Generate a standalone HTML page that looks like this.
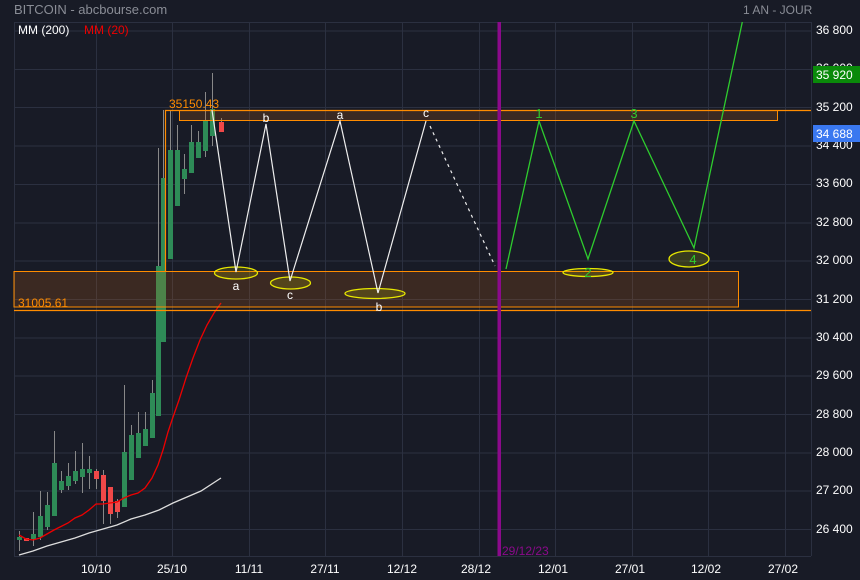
<!DOCTYPE html>
<html><head><meta charset="utf-8"><style>
html,body{margin:0;padding:0;background:#181b26;width:860px;height:580px;overflow:hidden}
svg{display:block;font-family:"Liberation Sans",sans-serif}
</style></head><body>
<svg width="860" height="580" viewBox="0 0 860 580">
<rect width="860" height="580" fill="#181b26"/>
<text x="14" y="14" fill="#8a8d96" font-size="13">BITCOIN - abcbourse.com</text>
<text x="743" y="14" fill="#8a8d96" font-size="12">1 AN - JOUR</text>
<g stroke="#2b3040" stroke-width="1">
<line x1="14" y1="31" x2="811" y2="31"/><line x1="14" y1="69.5" x2="811" y2="69.5"/><line x1="14" y1="107.5" x2="811" y2="107.5"/><line x1="14" y1="146" x2="811" y2="146"/><line x1="14" y1="184.5" x2="811" y2="184.5"/><line x1="14" y1="223" x2="811" y2="223"/><line x1="14" y1="261" x2="811" y2="261"/><line x1="14" y1="299.5" x2="811" y2="299.5"/><line x1="14" y1="338" x2="811" y2="338"/><line x1="14" y1="376" x2="811" y2="376"/><line x1="14" y1="414.5" x2="811" y2="414.5"/><line x1="14" y1="453" x2="811" y2="453"/><line x1="14" y1="491" x2="811" y2="491"/><line x1="14" y1="529.5" x2="811" y2="529.5"/>
<line x1="96.5" y1="22" x2="96.5" y2="556"/><line x1="172.5" y1="22" x2="172.5" y2="556"/><line x1="249.5" y1="22" x2="249.5" y2="556"/><line x1="325.5" y1="22" x2="325.5" y2="556"/><line x1="402.5" y1="22" x2="402.5" y2="556"/><line x1="479.5" y1="22" x2="479.5" y2="556"/><line x1="555.5" y1="22" x2="555.5" y2="556"/><line x1="632.5" y1="22" x2="632.5" y2="556"/><line x1="708.5" y1="22" x2="708.5" y2="556"/><line x1="785.5" y1="22" x2="785.5" y2="556"/>
<line x1="14.5" y1="22" x2="14.5" y2="556"/><line x1="811.5" y1="22" x2="811.5" y2="556"/><line x1="14" y1="22.5" x2="811" y2="22.5"/><line x1="14" y1="556.5" x2="811" y2="556.5"/>
</g>
<text x="18" y="34" fill="#fff" font-size="12">MM (200)</text>
<text x="84" y="34" fill="#e00" font-size="12">MM (20)</text>
<g stroke="#888" stroke-width="1">
<line x1="19.5" y1="531" x2="19.5" y2="551"/><line x1="33.5" y1="512" x2="33.5" y2="546"/><line x1="40.5" y1="491" x2="40.5" y2="540"/><line x1="47.5" y1="492" x2="47.5" y2="530"/><line x1="54.5" y1="431" x2="54.5" y2="516"/><line x1="61.5" y1="471" x2="61.5" y2="493"/><line x1="68.5" y1="463" x2="68.5" y2="490"/><line x1="75.5" y1="451" x2="75.5" y2="484"/><line x1="82.5" y1="443" x2="82.5" y2="493"/><line x1="89.5" y1="456" x2="89.5" y2="489"/><line x1="96.5" y1="469" x2="96.5" y2="489"/><line x1="103.5" y1="470" x2="103.5" y2="524"/><line x1="110.5" y1="487" x2="110.5" y2="524"/><line x1="117.5" y1="499" x2="117.5" y2="518"/><line x1="124.5" y1="385" x2="124.5" y2="507"/><line x1="131.5" y1="425" x2="131.5" y2="480"/><line x1="138.5" y1="412" x2="138.5" y2="458"/><line x1="145.5" y1="412" x2="145.5" y2="446"/><line x1="152.5" y1="380" x2="152.5" y2="438"/><line x1="158.5" y1="148" x2="158.5" y2="416"/><line x1="163.5" y1="110" x2="163.5" y2="342"/><line x1="170.5" y1="110" x2="170.5" y2="259"/><line x1="177.5" y1="125" x2="177.5" y2="206"/><line x1="184.5" y1="154" x2="184.5" y2="194"/><line x1="191.5" y1="125" x2="191.5" y2="173"/><line x1="198.5" y1="131" x2="198.5" y2="158"/><line x1="205.5" y1="92" x2="205.5" y2="157"/><line x1="212.5" y1="73" x2="212.5" y2="146"/><line x1="221.5" y1="118" x2="221.5" y2="132"/>
</g>
<g fill="#2e8b57">
<rect x="17" y="537" width="5" height="3"/><rect x="31" y="534" width="5" height="5"/><rect x="38" y="516" width="5" height="21"/><rect x="45" y="505" width="5" height="22"/><rect x="52" y="463" width="5" height="53"/><rect x="59" y="481" width="5" height="9"/><rect x="66" y="476" width="5" height="10"/><rect x="73" y="471" width="5" height="10"/><rect x="80" y="469" width="5" height="8"/><rect x="87" y="469" width="5" height="4"/><rect x="122" y="452" width="5" height="55"/><rect x="129" y="435" width="5" height="45"/><rect x="136" y="433" width="5" height="25"/><rect x="143" y="429" width="5" height="17"/><rect x="150" y="393" width="5" height="45"/><rect x="156" y="266" width="5" height="150"/><rect x="161" y="178" width="5" height="164"/><rect x="168" y="150" width="5" height="109"/><rect x="175" y="150" width="5" height="56"/><rect x="182" y="169" width="5" height="10"/><rect x="189" y="142" width="5" height="31"/><rect x="196" y="142" width="5" height="16"/><rect x="203" y="121" width="5" height="30"/><rect x="210" y="109" width="5" height="27"/>
</g>
<g fill="#f04848">
<rect x="24" y="538" width="5" height="3"/><rect x="94" y="471" width="5" height="8"/><rect x="101" y="475" width="5" height="26"/><rect x="108" y="487" width="5" height="27"/><rect x="115" y="501" width="5" height="11"/><rect x="219" y="122" width="5" height="10"/>
</g>
<polyline fill="none" stroke="#e00" stroke-width="1.3" points="19,535 26,539 33,540 40,538 54,530 68,523 75,518 82,515 89,510 96,504 103,504 110,503 117,502 124,498 131,495 138,493 145,488 152,478 158,465 163,450 168,432 172,420 179,400 186,378 193,358 200,340 207,325 214,313 221,303"/>
<polyline fill="none" stroke="#ddd" stroke-width="1.3" points="19,555 33,551 47,546 61,542 75,538 89,533 103,529 117,525 131,519 145,515 159,510 173,503 187,497 201,491 221,478"/>
<rect x="14" y="271.5" width="724.5" height="35.5" fill="rgba(200,102,18,0.2)" stroke="#ff8c00" stroke-width="1"/>
<line x1="14" y1="310.5" x2="811" y2="310.5" stroke="#ff8c00" stroke-width="1.2"/>
<text x="18" y="307" fill="#ff8c00" font-size="12">31005.61</text>
<rect x="179.5" y="110.5" width="598" height="10" fill="rgba(200,102,18,0.2)" stroke="#ff8c00" stroke-width="1"/>
<polyline fill="none" stroke="#ff8c00" stroke-width="1.2" points="165.5,271 165.5,110.5 811,110.5"/>
<text x="169" y="108" fill="#ff8c00" font-size="12">35150.43</text>
<rect x="497.5" y="22" width="3.5" height="534" fill="#8b0a8b"/>
<text x="502" y="555" fill="#8b0a8b" font-size="12">29/12/23</text>
<g fill="rgba(200,200,0,0.18)" stroke="#e8e800" stroke-width="1.3">
<ellipse cx="236" cy="273" rx="21.5" ry="6"/><ellipse cx="290.5" cy="283" rx="20" ry="6"/><ellipse cx="375" cy="293.5" rx="30" ry="5"/><ellipse cx="588" cy="272.5" rx="25" ry="4"/><ellipse cx="689" cy="259" rx="20" ry="8"/>
</g>
<polyline fill="none" stroke="#eee" stroke-width="1.2" points="212,110 236,272 266,124 290,281 340,121 378,293 426,121"/>
<line x1="430" y1="126" x2="495" y2="266" stroke="#eee" stroke-width="1.2" stroke-dasharray="3,4"/>
<polyline fill="none" stroke="#2ecc2e" stroke-width="1.3" points="506,269 539,121 588,259 634,121 694,248 742.3,22"/>
<g fill="#fff" font-size="12" text-anchor="middle">
<text x="266" y="122">b</text><text x="340" y="119">a</text><text x="426" y="117">c</text>
<text x="236" y="290">a</text><text x="290" y="299">c</text><text x="379" y="311">b</text>
</g>
<g fill="#2ecc2e" font-size="13" text-anchor="middle">
<text x="539" y="118">1</text><text x="634" y="118">3</text><text x="588" y="277">2</text><text x="693" y="264">4</text>
</g>
<g fill="#fff" font-size="12">
<text x="816" y="34">36 800</text><text x="816" y="72">36 000</text><text x="816" y="111">35 200</text><text x="816" y="149">34 400</text><text x="816" y="187">33 600</text><text x="816" y="226">32 800</text><text x="816" y="264">32 000</text><text x="816" y="303">31 200</text><text x="816" y="341">30 400</text><text x="816" y="379">29 600</text><text x="816" y="418">28 800</text><text x="816" y="456">28 000</text><text x="816" y="494">27 200</text><text x="816" y="533">26 400</text>
</g>
<rect x="813" y="66" width="47" height="17" fill="#0a8a0a"/>
<text x="816" y="79" fill="#fff" font-size="12">35 920</text>
<rect x="813" y="125" width="47" height="17" fill="#3a78f0"/>
<text x="816" y="138" fill="#fff" font-size="12">34 688</text>
<g fill="#fff" font-size="12" text-anchor="middle">
<text x="96" y="573">10/10</text><text x="172" y="573">25/10</text><text x="249" y="573">11/11</text><text x="325" y="573">27/11</text><text x="402" y="573">12/12</text><text x="476" y="573">28/12</text><text x="553" y="573">12/01</text><text x="630" y="573">27/01</text><text x="706" y="573">12/02</text><text x="783" y="573">27/02</text>
</g>
</svg>
</body></html>
